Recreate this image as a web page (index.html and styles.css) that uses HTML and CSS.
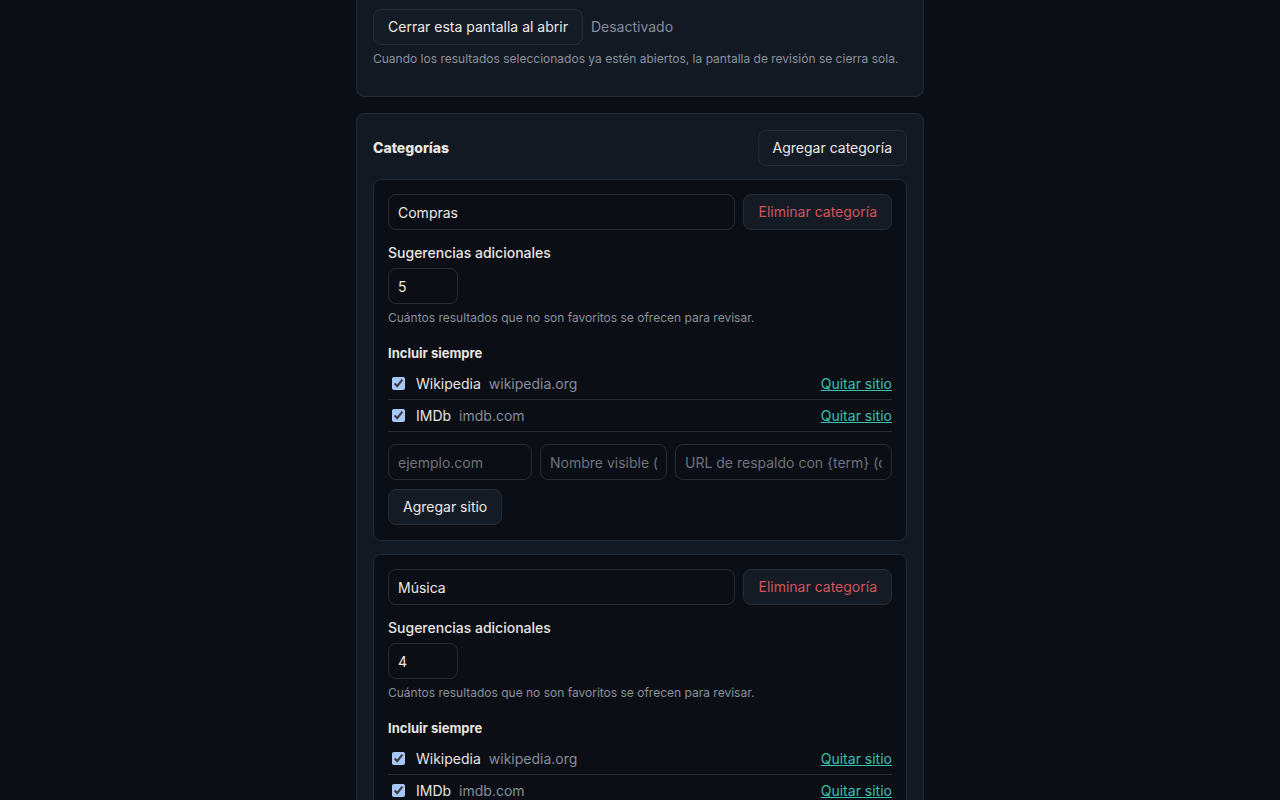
FILE: index.html
```html
<!DOCTYPE html>
<html lang="es">
<head>
<meta charset="utf-8">
<title>Opciones</title>
<link rel="stylesheet" href="styles.css">
</head>
<body>
<main class="wrap">
  <section class="card card-top">
    <div class="toggle-row">
      <button class="btn">Cerrar esta pantalla al abrir</button>
      <span class="state">Desactivado</span>
    </div>
    <p class="help">Cuando los resultados seleccionados ya estén abiertos, la pantalla de revisión se cierra sola.</p>
  </section>

  <section class="card">
    <div class="card-head">
      <h2 class="title">Categorías</h2>
      <button class="btn">Agregar categoría</button>
    </div>

    <div class="cat">
      <div class="cat-head">
        <input class="field grow" type="text" value="Compras">
        <button class="btn danger">Eliminar categoría</button>
      </div>
      <label class="label">Sugerencias adicionales</label>
      <input class="field num" type="text" value="5">
      <p class="help small">Cuántos resultados que no son favoritos se ofrecen para revisar.</p>
      <h3 class="sub">Incluir siempre</h3>
      <ul class="sites">
        <li class="site"><input type="checkbox" checked><span class="name">Wikipedia</span><span class="domain">wikipedia.org</span><a class="link" href="#">Quitar sitio</a></li>
        <li class="site"><input type="checkbox" checked><span class="name">IMDb</span><span class="domain">imdb.com</span><a class="link" href="#">Quitar sitio</a></li>
      </ul>
      <div class="add-row">
        <input class="field f1" type="text" placeholder="ejemplo.com">
        <input class="field f2" type="text" placeholder="Nombre visible (opcional)">
        <input class="field f3" type="text" placeholder="URL de respaldo con {term} (opcional)">
      </div>
      <button class="btn add">Agregar sitio</button>
    </div>

    <div class="cat">
      <div class="cat-head">
        <input class="field grow" type="text" value="Música">
        <button class="btn danger">Eliminar categoría</button>
      </div>
      <label class="label">Sugerencias adicionales</label>
      <input class="field num" type="text" value="4">
      <p class="help small">Cuántos resultados que no son favoritos se ofrecen para revisar.</p>
      <h3 class="sub">Incluir siempre</h3>
      <ul class="sites">
        <li class="site"><input type="checkbox" checked><span class="name">Wikipedia</span><span class="domain">wikipedia.org</span><a class="link" href="#">Quitar sitio</a></li>
        <li class="site"><input type="checkbox" checked><span class="name">IMDb</span><span class="domain">imdb.com</span><a class="link" href="#">Quitar sitio</a></li>
      </ul>
      <div class="add-row">
        <input class="field f1" type="text" placeholder="ejemplo.com">
        <input class="field f2" type="text" placeholder="Nombre visible (opcional)">
        <input class="field f3" type="text" placeholder="URL de respaldo con {term} (opcional)">
      </div>
      <button class="btn add">Agregar sitio</button>
    </div>
  </section>
</main>
</body>
</html>
```

FILE: styles.css
```css
* { box-sizing: border-box; }
html, body { margin: 0; padding: 0; }
body {
  background: #0b0e14;
  color: #e8e5e0;
  font-family: Inter, "Noto Sans", "Liberation Sans", sans-serif;
  font-size: 14px;
  line-height: 20px;
  overflow: hidden;
}
.wrap {
  width: 568px;
  margin: -40px auto 0;
  display: flex;
  flex-direction: column;
  gap: 16px;
}
.card {
  background: #131922;
  border: 1px solid #222a35;
  border-radius: 8px;
  padding: 16px;
}
.card-top {
  padding-top: 48px;
  padding-bottom: 29px;
}
.toggle-row {
  display: flex;
  align-items: center;
  gap: 8px;
}
.state { color: #858d9a; }
.btn {
  font: inherit;
  height: 36px;
  padding: 0 14px;
  background: #151b24;
  color: #ece9e4;
  border: 1px solid #242c38;
  border-radius: 8px;
  cursor: pointer;
}
.btn.danger { color: #d4525e; }
.help {
  margin: 6px 0 0;
  font-size: 12px;
  line-height: 16px;
  color: #8a919d;
}
.card-head {
  display: flex;
  align-items: center;
  justify-content: space-between;
  margin-bottom: 13px;
}
.title {
  margin: 0;
  font-size: 14px;
  font-weight: 800;
}
.cat {
  background: #0b0e14;
  border: 1px solid #222a35;
  border-radius: 8px;
  padding: 14px 14px 15px;
  display: flex;
  flex-direction: column;
  align-items: flex-start;
}
.cat + .cat { margin-top: 13px; }
.cat-head {
  display: flex;
  gap: 8px;
  width: 100%;
}
.field {
  font: inherit;
  height: 36px;
  padding: 0 9px;
  background: #0b0e14;
  color: #ece9e4;
  border: 1px solid #242c38;
  border-radius: 8px;
  outline: none;
  min-width: 0;
}
.field::placeholder { color: #6c737f; }
.grow { flex: 1; }
.label {
  margin-top: 13px;
  font-weight: 500;
}
.num {
  width: 70px;
  margin-top: 5px;
}
.sub {
  margin: 19px 0 7px;
  font-size: 13px;
  line-height: 16px;
  font-weight: 700;
}
.sites {
  list-style: none;
  margin: 0;
  padding: 0;
  width: 100%;
}
.site {
  height: 32px;
  display: flex;
  align-items: center;
  border-bottom: 1px solid #222a35;
}
.site input {
  accent-color: #a8c7fa;
  width: 13px;
  height: 13px;
  margin: 0 3px 0 4px;
}
.name { margin-left: 8px; }
.domain {
  margin-left: 8px;
  color: #858d9a;
}
.link {
  margin-left: auto;
  color: #3cc0ae;
  text-decoration: underline;
}
.add-row {
  display: flex;
  gap: 8px;
  width: 100%;
  margin-top: 12px;
}
.f1 { width: 144px; }
.f2 { width: 127px; }
.f3 { flex: 1; }
.add { margin-top: 9px; }
```
